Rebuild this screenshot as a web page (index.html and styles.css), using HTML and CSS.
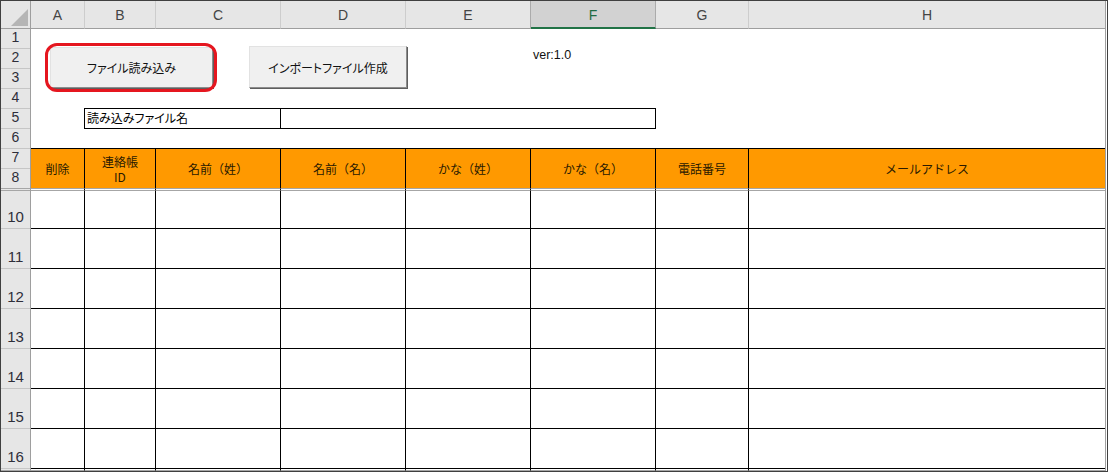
FILE: index.html
```html
<!DOCTYPE html>
<html lang="ja">

<head>
    <meta charset="utf-8">
    <title>連絡帳インポート</title>
    <link rel="stylesheet" href="styles.css">
</head>

<body>
    <div class="window">
        <div class="sheet">
            <!-- select-all corner -->
            <div class="corner">
                <svg width="17" height="17" viewBox="0 0 17 17">
                    <polygon points="17,0 17,17 0,17" fill="#b5b5b5" />
                </svg>
            </div>

            <!-- column letters -->
            <div class="col-heads">
                <div class="ch">A</div>
                <div class="ch">B</div>
                <div class="ch">C</div>
                <div class="ch">D</div>
                <div class="ch before-sel">E</div>
                <div class="ch selected">F</div>
                <div class="ch">G</div>
                <div class="ch">H</div>
            </div>

            <!-- row numbers -->
            <div class="row-heads">
                <div class="rh">1</div>
                <div class="rh">2</div>
                <div class="rh">3</div>
                <div class="rh">4</div>
                <div class="rh">5</div>
                <div class="rh">6</div>
                <div class="rh">7</div>
                <div class="rh edge">8</div>
                <div class="rh hidden"></div>
                <div class="rh tall first">10</div>
                <div class="rh tall">11</div>
                <div class="rh tall">12</div>
                <div class="rh tall">13</div>
                <div class="rh tall">14</div>
                <div class="rh tall">15</div>
                <div class="rh tall">16</div>
                <div class="rh tail"></div>
            </div>

            <div class="cells">
                <div class="top-band">
                    <div class="btn-wrap marked">
                        <button class="xl-btn">ファイル読み込み</button>
                    </div>
                    <button class="xl-btn import">インポートファイル作成</button>
                    <span class="version">ver:1.0</span>
                </div>

                <div class="file-row">
                    <div class="file-label">読み込みファイル名</div>
                    <div class="file-name"></div>
                </div>

                <div class="blank-row"></div>

                <!-- table header (rows 7-8) -->
                <div class="grid-row head">
                    <div>削除</div>
                    <div>連絡帳<br>ID</div>
                    <div>名前（姓）</div>
                    <div>名前（名）</div>
                    <div>かな（姓）</div>
                    <div>かな（名）</div>
                    <div>電話番号</div>
                    <div>メールアドレス</div>
                </div>

                <div class="grid-row hidden-row">
                    <span></span><span></span><span></span><span></span><span></span><span></span><span></span><span></span>
                </div>

                <div class="grid-row data first">
                    <span></span><span></span><span></span><span></span><span></span><span></span><span></span><span></span>
                </div>
                <div class="grid-row data">
                    <span></span><span></span><span></span><span></span><span></span><span></span><span></span><span></span>
                </div>
                <div class="grid-row data">
                    <span></span><span></span><span></span><span></span><span></span><span></span><span></span><span></span>
                </div>
                <div class="grid-row data">
                    <span></span><span></span><span></span><span></span><span></span><span></span><span></span><span></span>
                </div>
                <div class="grid-row data">
                    <span></span><span></span><span></span><span></span><span></span><span></span><span></span><span></span>
                </div>
                <div class="grid-row data">
                    <span></span><span></span><span></span><span></span><span></span><span></span><span></span><span></span>
                </div>
                <div class="grid-row data">
                    <span></span><span></span><span></span><span></span><span></span><span></span><span></span><span></span>
                </div>

                <div class="grid-row tail-row">
                    <span></span><span></span><span></span><span></span><span></span><span></span><span></span><span></span>
                </div>
            </div>
        </div>
    </div>
</body>

</html>
```

FILE: styles.css
```css
/* Excel-like sheet */
:root {
    --cols: 54px 71px 125px 125px 125px 125px 93px 356px;
    --head-bg: #e6e6e6;
    --head-line: #9e9e9e;
    --grid-gray: #a6a6a6;
}

* {
    box-sizing: border-box;
}

body {
    margin: 0;
    background-color: #fff;
    font-family: "Noto Sans CJK JP", "Noto Sans", sans-serif;
    font-feature-settings: "palt";
    color: #000;
}

.window {
    width: 1108px;
    height: 472px;
    border: 1px solid #404040;
}

.sheet {
    width: 1105px;
    height: 470px;
    display: grid;
    grid-template-columns: 30px 1fr;
    grid-template-rows: 28px 1fr;
    border-right: 1px solid #a0a0a0;
}

.corner {
    background-color: var(--head-bg);
    border-right: 1px solid var(--head-line);
    border-bottom: 1px solid var(--head-line);
    display: flex;
    justify-content: flex-end;
    align-items: flex-end;
    padding: 0 2px 2px 0;
}

.corner svg {
    display: block;
}

/* column letters */
.col-heads {
    display: grid;
    grid-template-columns: var(--cols);
    background-color: var(--head-bg);
}

.ch {
    border-right: 1px solid #cdcdcd;
    border-bottom: 1px solid var(--head-line);
    display: flex;
    justify-content: center;
    align-items: center;
    padding-top: 1px;
    font-family: "Liberation Sans", Arial, sans-serif;
    font-size: 14px;
    color: #444;
}

.ch:last-child {
    border-right: none;
}

.ch.before-sel {
    border-right-color: #ababab;
}

.ch.selected {
    background-color: #d2d2d2;
    border-right-color: #ababab;
    border-bottom: 2px solid #217346;
    padding-top: 2px;
    color: #1e6b43;
}

/* row numbers */
.row-heads {
    background-color: var(--head-bg);
    border-right: 1px solid var(--head-line);
    display: flex;
    flex-direction: column;
}

.rh {
    height: 20px;
    border-bottom: 1px solid #c6c6c6;
    display: flex;
    justify-content: center;
    align-items: flex-end;
    padding-bottom: 4px;
    font-family: "Liberation Sans", Arial, sans-serif;
    font-size: 14px;
    line-height: 14px;
    color: #2e2e3a;
}

.rh.edge {
    border-bottom-color: var(--grid-gray);
}

.rh.hidden {
    height: 2px;
    padding: 0;
    border-bottom-color: var(--grid-gray);
}

.rh.tall {
    height: 40px;
    font-size: 15px;
    padding-bottom: 4px;
}

.rh.tall.first {
    height: 38px;
}

.rh.tail {
    height: 2px;
    padding: 0;
    border-bottom-color: var(--grid-gray);
}

/* sheet body */
.cells {
    display: flex;
    flex-direction: column;
    min-width: 0;
}

.top-band {
    height: 80px;
    display: flex;
    align-items: flex-start;
    padding: 17px 0 0 19px;
}

.btn-wrap {
    position: relative;
    width: 163px;
    height: 41px;
    margin-top: 1px;
}

/* red annotation ring */
.marked::after {
    content: "";
    position: absolute;
    top: -4px;
    left: -5px;
    right: -4px;
    bottom: -4px;
    border: 3px solid #e5161f;
    border-radius: 12px;
    pointer-events: none;
}

.xl-btn {
    width: 100%;
    height: 100%;
    padding: 0;
    background-color: #f0f0f0;
    border: 1px solid;
    border-color: #e2e2e2 #8c8c8c #8c8c8c #e2e2e2;
    box-shadow: 1px 1px 0 #5e5e5e;
    font-family: "Noto Sans CJK JP", sans-serif;
    font-feature-settings: "palt";
    font-size: 12px;
    color: #111;
}

.xl-btn.import {
    width: 158px;
    height: 42px;
    margin-left: 36px;
}

.version {
    margin-left: 126px;
    margin-top: 2px;
    font-family: "Liberation Sans", Arial, sans-serif;
    font-size: 12.5px;
    line-height: 14px;
    color: #111;
}

.file-row {
    height: 21px;
    margin-top: -1px;
    display: grid;
    grid-template-columns: var(--cols);
}

.file-label {
    grid-column: 2 / 4;
    margin-left: -1px;
    border: 1px solid #000;
    padding-left: 2px;
    font-size: 12px;
    line-height: 18px;
    white-space: nowrap;
}

.file-name {
    grid-column: 4 / 7;
    border: 1px solid #000;
    border-left: none;
}

.blank-row {
    height: 20px;
}

.grid-row {
    display: grid;
    grid-template-columns: var(--cols);
}

.grid-row > * {
    border-right: 1px solid #000;
}

.grid-row > *:last-child {
    border-right: none;
}

.head {
    height: 41px;
    margin-top: -1px;
}

/* full-width brackets keep their spacing here */
.head > div {
    background-color: #ff9900;
    border-top: 1px solid #000;
    border-bottom: 1px solid var(--grid-gray);
    display: flex;
    justify-content: center;
    align-items: center;
    text-align: center;
    font-size: 12px;
    font-feature-settings: normal;
    line-height: 15px;
    color: #2a1a00;
}

.hidden-row {
    height: 2px;
}

.hidden-row > span {
    border-bottom: 1px solid var(--grid-gray);
}

.data {
    height: 40px;
}

.data.first {
    height: 38px;
}

.data > span {
    border-bottom: 1px solid #000;
}

.tail-row {
    height: 2px;
}

.tail-row > span {
    border-bottom: 1px solid var(--grid-gray);
}
```
